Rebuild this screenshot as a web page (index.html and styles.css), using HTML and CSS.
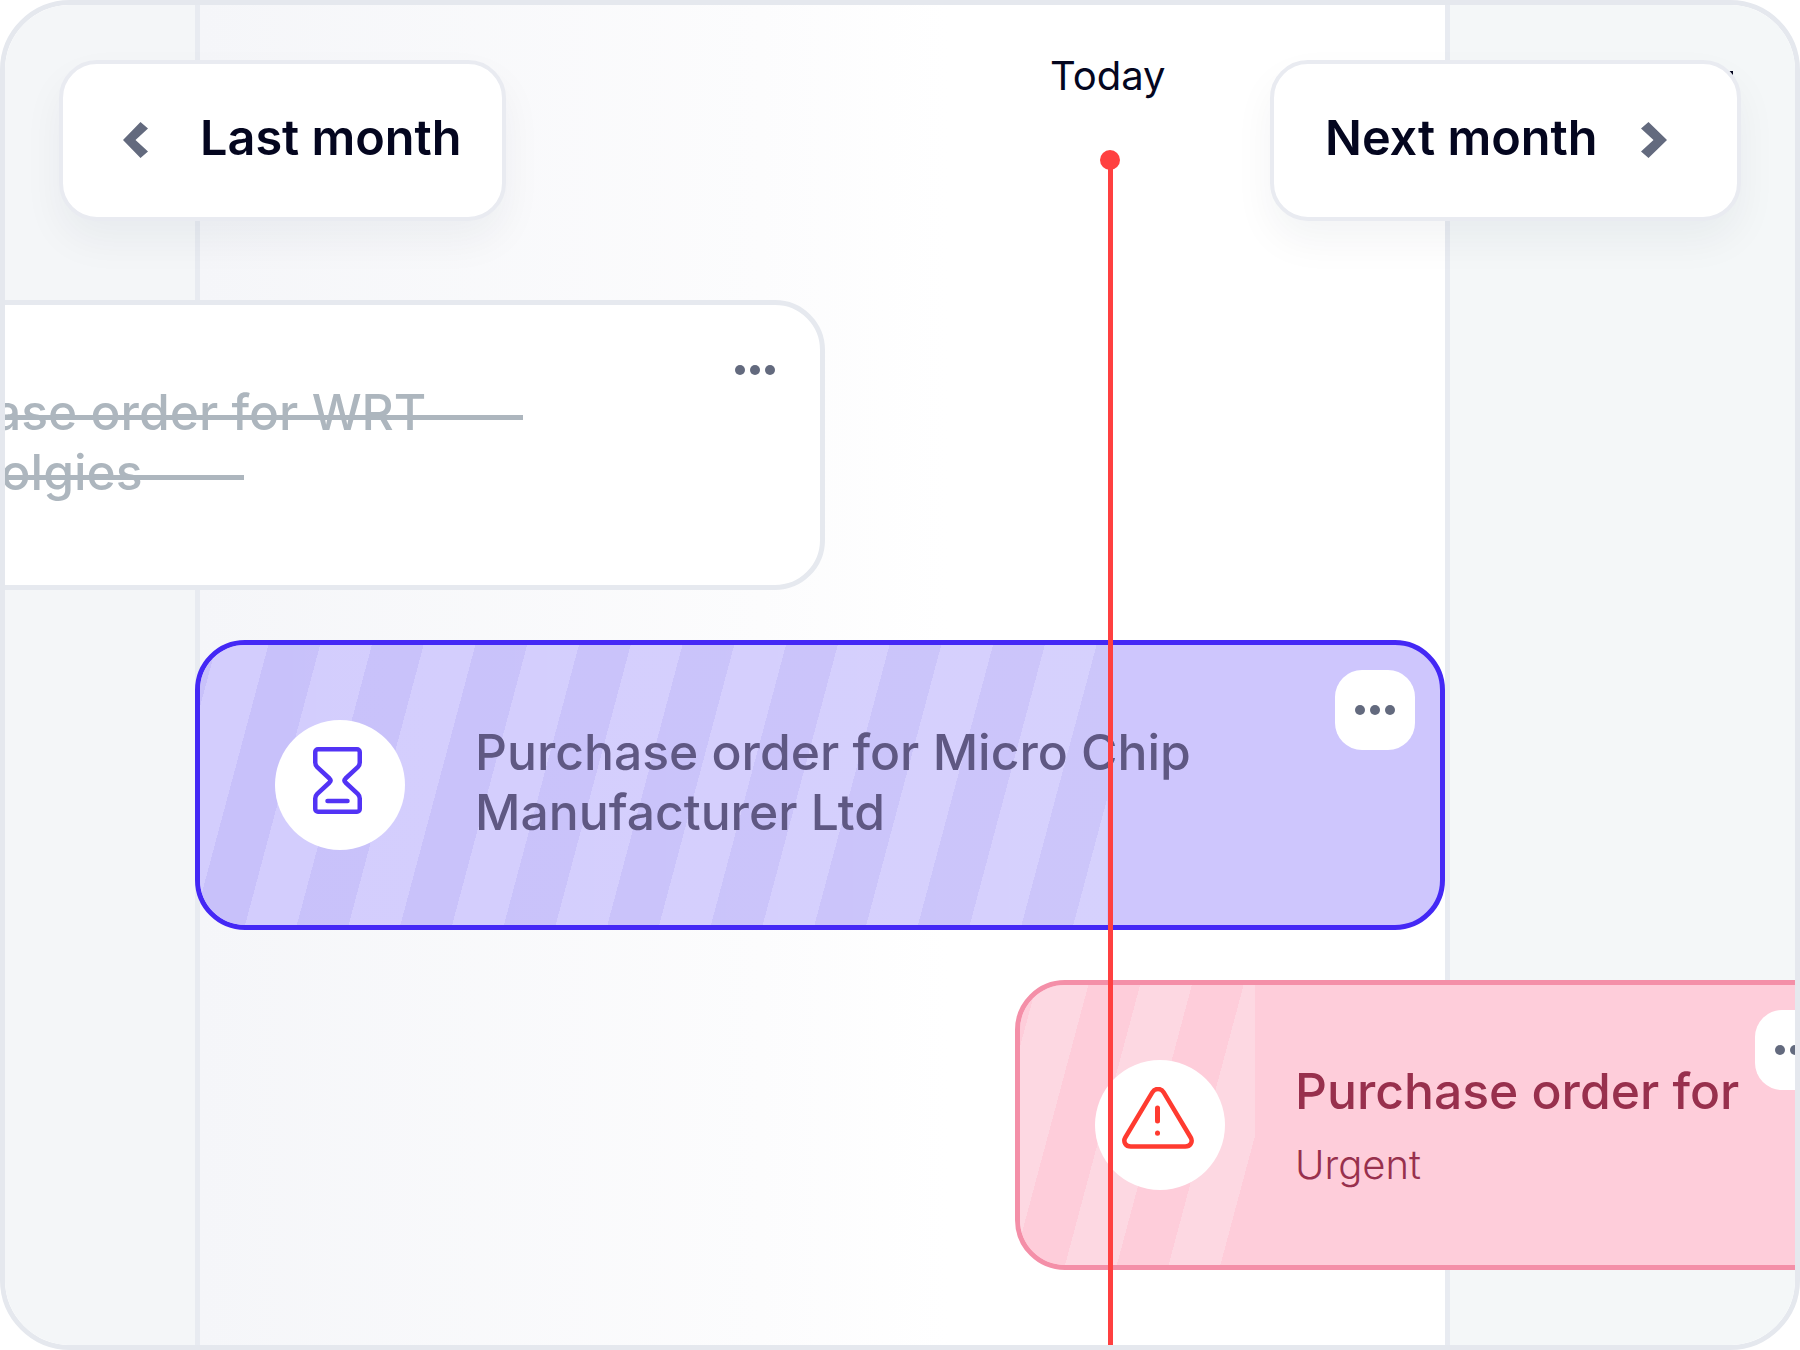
FILE: index.html
```html
<!DOCTYPE html>
<html lang="en">
<head>
    <meta charset="UTF-8">
    <meta name="viewport" content="width=device-width, initial-scale=1.0">
    <title>Timeline</title>
    <link rel="stylesheet" href="styles.css">
</head>
<body>
    <div class="timeline">
        <!-- Month columns -->
        <div class="columns">
            <div class="column column-past"></div>
            <div class="column column-current"></div>
            <div class="column column-next"></div>
        </div>

        <!-- Orders -->
        <div class="order order-done">
            <div class="order-text">
                <span class="struck struck-first">Purchase order for WRT</span>
                <span class="struck struck-second">Technolgies</span>
            </div>
            <button class="more more-plain"><i></i><i></i><i></i></button>
        </div>

        <div class="order order-waiting">
            <div class="stripes"></div>
            <div class="order-icon">
                <svg class="icon-hourglass" width="49" height="67" viewBox="0 0 49 67" fill="none" stroke="#5233f5" stroke-width="4.5" stroke-linejoin="round" stroke-linecap="round">
                    <path d="M5 2.25h39a2.75 2.75 0 0 1 2.75 2.75v10.5c0 1.8-.7 3.4-2 4.7L32.5 31.5c-1.2 1.2-1.2 2.8 0 4l12.25 11.3c1.3 1.3 2 2.9 2 4.7V62a2.75 2.75 0 0 1-2.75 2.75H5A2.75 2.75 0 0 1 2.25 62V51.5c0-1.8.7-3.4 2-4.7L16.5 35.5c1.2-1.2 1.2-2.8 0-4L4.25 20.2c-1.3-1.3-2-2.9-2-4.7V5A2.75 2.75 0 0 1 5 2.25z"/>
                    <path d="M14.5 54h20"/>
                </svg>
            </div>
            <div class="order-text">
                <p>Purchase order for Micro Chip</p>
                <p>Manufacturer Ltd</p>
            </div>
            <button class="more"><i></i><i></i><i></i></button>
        </div>

        <div class="order order-urgent">
            <div class="stripes"></div>
            <div class="order-icon">
                <svg class="icon-warning" width="72" height="62" viewBox="0 0 72 62" fill="none" stroke="#ff3b30" stroke-width="4.5" stroke-linecap="round" stroke-linejoin="round">
                    <path d="M30.3 5.3 3.3 50.5C.7 55 3.8 59.5 8.8 59.5h54.4c5 0 8.1-4.5 5.5-9L41.7 5.3c-2.6-4.4-8.8-4.4-11.4 0z"/>
                    <path d="M35.5 21v13" stroke-width="5"/>
                    <path d="M35.5 46v.2" stroke-width="5"/>
                </svg>
            </div>
            <div class="order-text">
                <p class="order-title">Purchase order for</p>
                <p class="order-note">Urgent</p>
            </div>
            <button class="more"><i></i><i></i><i></i></button>
        </div>

        <!-- Today marker -->
        <div class="today">
            <span class="today-label">Today</span>
            <span class="today-dot"></span>
            <span class="today-line"></span>
        </div>

        <!-- Month navigation -->
        <span class="behind-next"></span>
        <button class="nav nav-last">
            <svg width="25" height="36" viewBox="0 0 25 36"><path d="M17.5 0 25 6.5 12.5 18 25 29.5 17.5 36 0 18z" fill="#636a7e"/></svg>
            <span class="nav-label">Last month</span>
        </button>
        <button class="nav nav-next">
            <span class="nav-label">Next month</span>
            <svg width="26" height="36" viewBox="0 0 26 36"><path d="M7.5 0 0 6.5 12.5 18 0 29.5 7.5 36 26 18z" fill="#636a7e"/></svg>
        </button>
    </div>
</body>
</html>
```

FILE: styles.css
```css
* {
    box-sizing: border-box;
}

body {
    margin: 0;
    background: #fff;
    font-family: Inter, "Liberation Sans", sans-serif;
}

p {
    margin: 0;
}

.timeline {
    position: relative;
    width: 1800px;
    height: 1350px;
    border: 5px solid #e5e8ee;
    border-radius: 70px;
    overflow: hidden;
    background: #fff;
}

.columns {
    display: flex;
    height: 100%;
}

.column-past {
    width: 190px;
    background: #f4f6f8;
}

.column-current {
    width: 1255px;
    border-left: 5px solid #e8ebf1;
    border-right: 5px solid #e8ebf1;
    background: linear-gradient(90deg, #f5f6f9 0, #fcfcfd 45%, #fff 60%);
}

.column-next {
    flex: 1;
    background: #f4f7f8;
}

.order {
    position: absolute;
    display: flex;
    align-items: center;
    height: 290px;
    border-radius: 50px;
    border: 5px solid;
    font-size: 49.8px;
    font-weight: 450;
    line-height: 60px;
    overflow: hidden;
}

.order-done {
    left: -423px;
    top: 295px;
    width: 1243px;
    border-color: #e6e9ef;
    background: #fff;
    color: #adb6be;
}

.order-waiting {
    left: 190px;
    top: 635px;
    width: 1250px;
    border-color: #4428f5;
    background: #cec6fd;
    color: #5f5883;
}

.order-urgent {
    left: 1010px;
    top: 975px;
    width: 1250px;
    border-color: #f48fa8;
    background: #fecdda;
    color: #98304d;
}

.stripes {
    position: absolute;
    left: 0;
    top: 0;
    height: 100%;
}

.order-waiting .stripes {
    width: 907px;
    background:
        linear-gradient(90deg, rgba(255, 255, 255, 0), rgba(255, 255, 255, 0.08)),
        repeating-linear-gradient(105deg, #c8c1fa -34px, #c8c1fa 16px, #d3cdfd 16px, #d3cdfd 66px);
}

.order-urgent .stripes {
    width: 235px;
    background: repeating-linear-gradient(105deg, #fecdda -34px, #fecdda 16px, #fdd8e2 16px, #fdd8e2 66px);
}

.order-icon {
    position: relative;
    display: flex;
    align-items: center;
    justify-content: center;
    flex-shrink: 0;
    width: 130px;
    height: 130px;
    margin-left: 75px;
    margin-right: 70px;
    border-radius: 50%;
    background: #fff;
}

.icon-hourglass {
    margin: 0 6px 9px 0;
}

.icon-warning {
    margin: 0 5px 15px 0;
}

.order-text {
    position: relative;
    padding-bottom: 6px;
}

.order-done .order-text {
    margin-left: 267px;
    margin-bottom: 6px;
    padding-bottom: 0;
}

.order-urgent .order-text {
    padding: 0;
}

.order-note {
    margin-top: 20px;
    font-size: 40px;
    font-weight: 300;
    line-height: 48px;
}

.struck {
    position: relative;
    display: block;
    width: fit-content;
}

.struck::after {
    content: "";
    position: absolute;
    left: 0;
    right: 0;
    top: 33px;
    height: 5px;
    background: #adb6be;
}

.struck-first {
    padding-right: 97px;
}

.struck-second {
    padding-right: 101px;
}

.more {
    position: absolute;
    right: 25px;
    top: 25px;
    display: flex;
    align-items: center;
    justify-content: center;
    gap: 5px;
    width: 80px;
    height: 80px;
    padding: 0;
    border: none;
    border-radius: 27px;
    background: #fff;
}

.more i {
    width: 10px;
    height: 10px;
    border-radius: 50%;
    background: #636a7e;
}

.more-plain {
    background: none;
}

.order-urgent .more {
    left: 735px;
    right: auto;
}

.today {
    position: absolute;
    left: 1103px;
    top: 0;
    width: 5px;
    height: 100%;
}

.today-label {
    position: absolute;
    left: -58px;
    top: 41px;
    font-size: 40px;
    line-height: 60px;
    color: #04061f;
}

.today-dot {
    position: absolute;
    left: -8px;
    top: 145px;
    width: 20px;
    height: 20px;
    border-radius: 50%;
    background: #ff4040;
}

.today-line {
    position: absolute;
    left: 0;
    top: 160px;
    bottom: 0;
    width: 5px;
    background: #ff4040;
}

.nav {
    position: absolute;
    top: 55px;
    display: flex;
    align-items: center;
    height: 161px;
    border: 4px solid #e9ebf1;
    border-radius: 38px;
    background: #fff;
    box-shadow: 0 20px 40px rgba(20, 30, 60, 0.05);
    font-family: inherit;
    font-size: 48.6px;
    font-weight: 600;
    color: #04061f;
}

.nav-label {
    margin-bottom: 6px;
}

.nav-last {
    left: 54px;
    width: 447px;
    padding: 0 0 0 60px;
    gap: 52px;
}

.nav-next {
    left: 1265px;
    width: 471px;
    padding: 0 0 0 51px;
    gap: 43px;
}

.nav svg {
    margin-bottom: 2px;
}

.behind-next {
    position: absolute;
    left: 1722px;
    top: 66px;
    width: 6px;
    height: 8px;
    background: #04061f;
}
```
